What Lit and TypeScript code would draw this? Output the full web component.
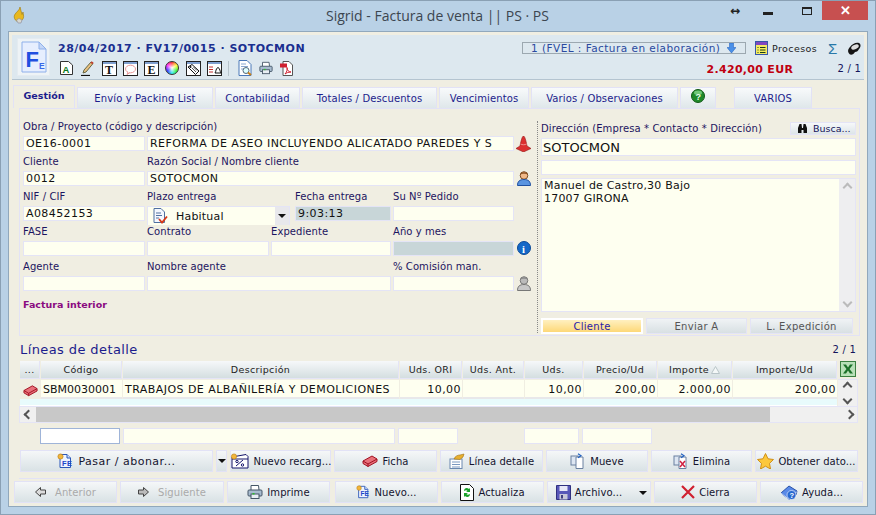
import { LitElement, html, css, svg } from "lit";
import { customElement } from "lit/decorators.js";

const ic = (w: number, h: number, body: unknown, vb = "0 0 16 16") =>
  html`<svg class="ic" width=${w} height=${h} viewBox=${vb}>${body}</svg>`;

const feDoc = (s = 16) =>
  ic(s, s, svg`<path d="M3 1.500h7l3.500 3.500v9.500H3z" fill="#eef4fe" stroke="#2b57b8"/><path d="M10 1.500V5h3.500" fill="#cfe0fa" stroke="#2b57b8"/><text x="5" y="12.600" font-size="7.500" font-weight="700" fill="#1c47c8" font-family="Liberation Sans">FE</text><circle cx="3.500" cy="3.500" r="2.600" fill="#f2b63c" stroke="#b87a10" stroke-width=".6"/>`);
const winTop = svg`<rect x=".5" y=".5" width="14" height="14" fill="#fff" stroke="#222"/><rect x="1" y="1" width="13" height="2" fill="#7f9fcf"/>`;
const brick = (s = 16) =>
  ic(s, s, svg`<path d="M1 8l9-5 5 3v2.500l-9 5-5-3z" fill="#e8707a" stroke="#a01020"/><path d="M1 8l5 3 9-5M6 11v2.500" fill="none" stroke="#a01020"/>`);
const printer = (s = 16) =>
  ic(s, s, svg`<path d="M4 6V1.500h7.500L12 6" fill="#fff" stroke="#456"/><rect x="1" y="6" width="14" height="6" rx="1" fill="#a8bccf" stroke="#456"/><rect x="4" y="10" width="8" height="4.500" fill="#e8eef4" stroke="#456"/><rect x="5.500" y="9" width="2" height="1.500" fill="#2cc02c"/>`);

const I = {
  app: ic(12, 18, svg`<path d="M7 0C7 3 3 5 1.500 8c-1 2.500.5 5 2 6l5-.5c1.500-1 2.500-3 2-5.500L10 5 9 7.500z" fill="#e8b820" stroke="#a07808" stroke-width=".6"/><path d="M3.500 13l2.500-1.500 3 1.500-1 3H5z" fill="#d8d8d0" stroke="#889" stroke-width=".6"/>`, "0 0 12 18"),
  logo: html`<svg class="ic" width="26" height="32" viewBox="0 0 26 32"><path d="M1 1h17l7 7v23H1z" fill="#e6eefe" stroke="#8fb0ea"/><path d="M18 1v7h7z" fill="#c4d6f6" stroke="#8fb0ea"/><text x="4.500" y="26" font-size="22" font-weight="700" fill="#1f4fe0" font-family="Liberation Sans">F</text><text x="18" y="28" font-size="8.500" font-weight="700" fill="#3a6ae8" font-family="Liberation Sans">E</text></svg>`,
  a: ic(13, 14, svg`<path d="M.5.5h8l4 3.500v9.500H.5z" fill="#fff" stroke="#333"/><text x="2.500" y="11.500" font-size="9.500" font-weight="700" fill="#0a7a20" font-family="Liberation Sans">A</text>`, "0 0 13 14"),
  pen: ic(14, 15, svg`<path d="M3 9l7-8 2 1.500-7 8.500-3 1z" fill="#e8c080" stroke="#664"/><path d="M10 1l2 1.500" stroke="#c04030" stroke-width="2"/><path d="M0 14.500h9" stroke="#111" stroke-width="1.200"/>`, "0 0 14 15"),
  t: ic(15, 15, svg`${winTop}<text x="3" y="13" font-size="12" font-weight="700" fill="#111" font-family="Liberation Serif">T</text>`, "0 0 15 15"),
  bubble: ic(15, 15, svg`${winTop}<ellipse cx="7.500" cy="8" rx="5" ry="3.800" fill="#fff" stroke="#e89898"/><path d="M5 11l-1 2.500 3-2" fill="#fff" stroke="#e89898"/>`, "0 0 15 15"),
  e: ic(15, 15, svg`${winTop}<text x="3.500" y="13" font-size="12" font-weight="700" fill="#111" font-family="Liberation Serif">E</text>`, "0 0 15 15"),
  tag: ic(15, 15, svg`${winTop}<path d="M2 6l4-2.500 7 6.500-3.500 3.500z" fill="#fff" stroke="#111"/><path d="M6 7l4 4M7.500 6l3.500 3.500" stroke="#555"/><circle cx="4.500" cy="6" r="1" fill="#111"/>`, "0 0 15 15"),
  bell: ic(15, 15, svg`${winTop}<path d="M2 6h4M2 8.500h4M2 11h4" stroke="#c03030"/><path d="M8 12c1-1 .8-5 3-5.500 2 .5 2 4.500 3 5.500z" fill="#fff" stroke="#111"/>`, "0 0 15 15"),
  search: ic(14, 16, svg`<path d="M1 .5h8l4 4v11H1z" fill="#fff" stroke="#4a78b8"/><path d="M3 4h5M3 6.500h7M3 9h3" stroke="#8aa8d0"/><circle cx="8" cy="10.500" r="3" fill="#dff" stroke="#567"/><path d="M10 12.500l3 2.500" stroke="#c88018" stroke-width="2"/>`, "0 0 14 16"),
  pdf: ic(13, 15, svg`<path d="M3 .5h6l3.500 3.500v10.500H3z" fill="#fff" stroke="#555"/><rect x="0" y="2.500" width="7" height="4" fill="#d02030"/><path d="M5 13c2-2 2.500-5 2-6.500 0 3 2 4.500 4 4.500-3 0-4.500 1-6 2z" fill="none" stroke="#d02030"/>`, "0 0 13 15"),
  down: ic(9, 10, svg`<path d="M2.500 0h4v4.500H9L4.500 10 0 4.500h2.500z" fill="#4a90e8" stroke="#1c58b8" stroke-width=".5"/>`, "0 0 9 10"),
  proc: ic(13, 14, svg`<rect x=".5" y=".5" width="12" height="13" fill="#f6ec60" stroke="#3858a8"/><rect x="1" y="1" width="11" height="3" fill="#8048c0"/><path d="M2.500 6.500h1M5 6.500h5.500M2.500 9h1M5 9h5.500M2.500 11.500h1M5 11.500h5.500" stroke="#184018"/>`, "0 0 13 14"),
  fold: ic(14, 13, svg`<path d="M3 12.500C0 10 1 7 3 5c2-3 6-5 9-4 2 1 2 4 0 6-1 2-2 3-4 3-1 2-3 3-5 2.500z" fill="#151515"/><ellipse cx="8" cy="5" rx="4" ry="2.200" fill="#ddd" transform="rotate(-25 8 5)"/>`, "0 0 14 13"),
  help: html`<svg class="ic" width="14" height="14" viewBox="0 0 14 14"><circle cx="7" cy="7" r="6.500" fill="#1f8a2a" stroke="#125a18"/><ellipse cx="7" cy="3.800" rx="4" ry="2.200" fill="#70c878"/><text x="4.500" y="11" font-size="9" font-weight="700" fill="#e8ffe8" font-family="Liberation Sans">?</text></svg>`,
  cone: ic(15, 16, svg`<path d="M7.500 0c1.500 0 3 7 3.500 10l4 2.500-7.500 3.500L0 12.500 4 10C4.500 7 6 0 7.500 0z" fill="#dc3030" stroke="#901818" stroke-width=".6"/><path d="M4.500 8c1.500 1 4.500 1 6 0" stroke="#f09090" fill="none"/>`, "0 0 15 16"),
  person: ic(14, 15, svg`<circle cx="7" cy="4.500" r="3.800" fill="#f0b888" stroke="#7a4a20"/><path d="M3 3.500c1-3 7-3 8 0-2-1-6-1-8 0z" fill="#8a5020"/><path d="M.5 14.500c0-4 2-6 6.500-6s6.500 2 6.500 6z" fill="#5a94e0" stroke="#2050a0"/>`, "0 0 14 15"),
  grayperson: ic(14, 15, svg`<circle cx="7" cy="4.500" r="3.800" fill="#bbb" stroke="#777"/><path d="M3 3.500c1-3 7-3 8 0-2-1-6-1-8 0z" fill="#888"/><path d="M.5 14.500c0-4 2-6 6.500-6s6.500 2 6.500 6z" fill="#c8c8c8" stroke="#777"/>`, "0 0 14 15"),
  info: html`<svg class="ic" width="14" height="14" viewBox="0 0 14 14"><circle cx="7" cy="7" r="6.500" fill="#1468c8" stroke="#0c4a98"/><text x="5" y="11.500" font-size="10.500" font-weight="700" fill="#fff" font-family="Liberation Serif">i</text></svg>`,
  doccheck: ic(16, 16, svg`<path d="M2 .5h7l3.500 3.500v10.500H2z" fill="#f4f8ff" stroke="#5070a0"/><path d="M4 5h5M4 7.500h6M4 10h3" stroke="#5070a0"/><path d="M7 11l3 3.500 5-6" fill="none" stroke="#d83818" stroke-width="1.800"/>`),
  bino: ic(11, 9, svg`<path d="M1 9V4l1.500-4h2L5 4h1l.5-4h2L10 4v5H6.500V6h-2v3z" fill="#111"/>`, "0 0 11 9"),
  excel: ic(16, 16, svg`<rect x=".5" y=".5" width="15" height="15" fill="#b8e0b8" stroke="#3a8040"/><path d="M3 3.500h3l2 3 2-3h3l-3.500 4.500L13 12.500h-3l-2-3-2 3H3l3.500-4.500z" fill="#1a7028"/>`),
  tri: ic(9, 8, svg`<path d="M4.500 .5L8.500 7.500H.5z" fill="#f4f8f8" stroke="#b8c4c8"/>`, "0 0 9 8"),
  recarg: ic(20, 16, svg`<path d="M2 4l14-2.500 2 2V15H2z" fill="#fff" stroke="#14146a"/><path d="M2 6h16" stroke="#14146a"/><path d="M6 13l7-6" stroke="#14146a"/><circle cx="7" cy="8.500" r="1.200" fill="none" stroke="#14146a"/><circle cx="12.500" cy="12" r="1.200" fill="none" stroke="#14146a"/><circle cx="4" cy="3.500" r="2.600" fill="#f2b63c" stroke="#b87a10" stroke-width=".6"/>`, "0 0 20 16"),
  linea: ic(16, 16, svg`<rect x="1" y="6" width="12" height="9.500" fill="#fff" stroke="#6a88b0"/><path d="M3 9h8M3 11.500h8M3 14h8" stroke="#7a98c0"/><path d="M5 6c1-3 4-4 6-4l4-1-1 3-3 2.500z" fill="#e8b030" stroke="#a07010" stroke-width=".6"/>`),
  mueve: ic(16, 16, svg`<rect x="1" y="3" width="7" height="9" fill="#dde6f2" stroke="#6a80a0"/><path d="M6 4h7v11.500H6z" fill="#fff" stroke="#6a80a0"/><path d="M8 .8l3 2-3 2" fill="none" stroke="#2060c0" stroke-width="1.200"/>`),
  elimina: ic(16, 16, svg`<rect x="1" y="3" width="7" height="9" fill="#dde6f2" stroke="#6a80a0"/><path d="M6 4h7v11.500H6z" fill="#fff" stroke="#6a80a0"/><path d="M7 8l5 6M12 8l-5 6" stroke="#d02040" stroke-width="1.500"/><path d="M8 .8l3 2-3 2" fill="none" stroke="#2060c0" stroke-width="1.200"/>`),
  star: ic(17, 16, svg`<path d="M8.500.5l2.500 5.300 5.500.7-4 3.900 1 5.600-5-2.800-5 2.800 1-5.600-4-3.900 5.500-.7z" fill="#fcc83c" stroke="#d09018"/>`, "0 0 17 16"),
  left: ic(11, 10, svg`<path d="M5.500.5L.5 5l5 4.500V7H10.500V3H5.500z" fill="#dcdcdc" stroke="#444"/>`, "0 0 11 10"),
  right: ic(11, 10, svg`<path d="M5.500.5l5 4.500-5 4.500V7H.5V3h5z" fill="#bbb" stroke="#444"/>`, "0 0 11 10"),
  refresh: ic(14, 17, svg`<path d="M.5.500h9l4 4v12H.5z" fill="#fff" stroke="#111"/><path d="M4 7c0-3 3-4 5-2l1-1v4H6l1.500-1C7 6 5.500 6 4 7zM10 10c0 3-3 4-5 2l-1 1V9h4l-1.500 1c.5 1 2 1 3.500 0z" fill="#18a028"/>`, "0 0 14 17"),
  save: ic(15, 15, svg`<path d="M.5.500h14v14H.5z" fill="#5858b8" stroke="#303080"/><rect x="3.500" y="1" width="8" height="5" fill="#e8e8f8"/><rect x="3.500" y="9" width="8" height="5.500" fill="#c8c8d8"/><rect x="5" y="10" width="2" height="3.500" fill="#404080"/>`, "0 0 15 15"),
  close: ic(14, 14, svg`<path d="M1 1l12 12M13 1L1 13" stroke="#d02030" stroke-width="2.200"/>`, "0 0 14 14"),
  book: ic(18, 15, svg`<path d="M1 8l8-7 8 5-1 4-7 4.500z" fill="#5a8ae8" stroke="#2850a8"/><path d="M1 8l8 6.500 8-8" fill="none" stroke="#c8d8f8"/><circle cx="11.500" cy="10" r="4.500" fill="#2868d0" stroke="#fff" stroke-width=".6"/><text x="9.600" y="13" font-size="7.500" font-weight="700" fill="#fff" font-family="Liberation Sans">?</text>`, "0 0 18 15"),
};

const caret = html`<span class="caret"></span>`;

@customElement("app-root")
export class AppRoot extends LitElement {
  static styles = css`
    :host {
      display: block;
      width: 876px;
      height: 515px;
      font-family: "DejaVu Sans", Verdana, sans-serif;
      font-size: 10px;
      color: #14145a;
      overflow: hidden;
    }
    * { box-sizing: border-box; }
    .ic { display: block; flex: none; }
    .window {
      width: 876px; height: 515px;
      background: #b9d1e6;
      border: 1px solid #8aa0b4;
      display: flex; flex-direction: column;
    }
    .titlebar { height: 29px; flex: none; display: grid; grid-template-columns: 12px 1fr 14px 47px 32px 45px; align-items: start; padding: 0 7px 0 12px; }
    .appicon { padding-top: 6px; }
    .title { font: 14px "Open Sans", "Noto Sans", sans-serif; color: #3c4650; text-align: center; padding: 4px 0 0 120px; line-height: 21px; }
    .resize { font: 700 12px "DejaVu Sans", sans-serif; color: #222; padding-top: 3px; }
    .tb-btn { height: 19px; display: flex; align-items: center; justify-content: center; }
    .tb-min { width: 10px; height: 3px; background: #222; margin-top: 5px; }
    .tb-max { width: 10px; height: 8px; border: 1px solid #222; border-top-width: 2px; }
    .tb-close { background: #c75050; color: #fff; font: 700 13px "Liberation Sans", sans-serif; margin-left: -1px; }
    .client {
      flex: 1; margin: 1px 7px 7px 7px;
      background: #f0eee2;
      border: 1px solid #91a8bc;
      padding: 3px 3px 0 3px;
      display: flex; flex-direction: column;
    }
    .head {
      height: 45px; flex: none; background: #dde8ef; border-bottom: 1px solid #b4c4d0;
      display: flex; padding: 3px 3px 0 5px; gap: 8px;
    }
    .logo { width: 33px; height: 38px; background: #eef3f6; border: 1px solid #e4ebf0; display: flex; align-items: center; justify-content: center; }
    .head-main { flex: 1; display: flex; flex-direction: column; padding-top: 3px; }
    .head-row { display: flex; align-items: center; height: 14px; }
    .head-row.second { height: 18px; margin-top: 5px; align-items: flex-start; }
    .doc-title { font-weight: 700; font-size: 11px; color: #1a2f90; letter-spacing: 0.5px; margin-right: auto; white-space: nowrap; }
    .status { width: 224px; height: 12px; border: 1px solid #9ca8b0; display: flex; align-items: center; gap: 7px; padding-left: 8px; color: #2a4aa0; font-size: 10.500px; letter-spacing: .46px; white-space: nowrap; }
    .procesos { display: flex; align-items: center; gap: 4px; margin-left: 9px; color: #222; font-size: 9.500px; letter-spacing: .4px; width: 73px; }
    .sigma { color: #2878a8; font: 15px "Liberation Sans", sans-serif; width: 19px; }
    .tools { display: grid; grid-template-columns: repeat(8, 21px) 10px repeat(3, 21px); align-items: center; height: 16px; margin: 0 auto 0 2px; }
    .tools .sep { width: 1px; height: 15px; background: #b8c4cc; }
    .wheel { width: 14px; height: 14px; border-radius: 50%; background: radial-gradient(circle, #fff 0, rgba(255,255,255,0) 65%), conic-gradient(#f33, #ff3, #3e3, #3ee, #33f, #f3f, #f33); border: 1px solid #333; }
    .total { color: #c00010; font-weight: 700; font-size: 11px; letter-spacing: .3px; width: 131px; margin-top: 3px; white-space: nowrap; }
    .pager { color: #14145a; font-size: 10px; letter-spacing: .2px; white-space: nowrap; }
    .second .pager { margin-top: 3px; }
    .tabs {
      height: 28px; flex: none; display: grid;
      grid-template-columns: 62px 136px 85px 135px 90px 147px 36px 78px;
      column-gap: 2px; padding: 5px 0 0 1px; align-items: start;
    }
    .tab {
      height: 21px; margin-top: 2px; background: linear-gradient(#f8fafb, #dfe7ea);
      border: 1px solid #e2e2f6; border-bottom: 0;
      display: flex; align-items: center; justify-content: center; color: #1c1c8c; font-size: 10px; letter-spacing: .12px;
    }
    .tab.on { height: 23px; margin-top: 0; background: #f0eee2; font-weight: 700; font-size: 9.500px; letter-spacing: 0; align-items: flex-start; padding-top: 4px; }
    .tab.help { align-items: flex-start; padding-top: 1px; }
    .tab.gap { margin-left: 16px; margin-right: -16px; }
    .panel {
      margin: 0 4px 0 7px; height: 228px; flex: none;
      border: 1px solid #e2e2f6;
      display: grid; grid-template-columns: 515px 1fr; padding: 11px 3px 2px 3px;
    }
    .left { display: flex; flex-direction: column; gap: 4px; }
    .row { display: grid; column-gap: 3px; align-items: start; height: 31px; }
    .r1 { grid-template-columns: 121px 366px 15px; }
    .r3 { grid-template-columns: 121px 121px 119px 120px 15px; }
    .rp { grid-template-columns: 121px 145px 95px 120px; }
    .r5 { grid-template-columns: 121px 243px 120px 15px; }
    .lab { display: block; height: 16px; line-height: 13px; white-space: nowrap; letter-spacing: .08px; color: #1c1460; }
    .inp { height: 15px; background: #fefff0; border: 1px solid #e4e4f6; font-size: 11px; color: #111; padding: 0 2px; line-height: 13px; white-space: nowrap; overflow: hidden; letter-spacing: .42px; margin-right: -1px; }
    .inp.gray { background: #c8d6d8; }
    .sel { height: 19px; margin-right: 2px; background: #fefff0; border: 1px solid #e4e4f6; border-bottom: 0; display: flex; align-items: center; gap: 8px; padding: 0 0 0 4px; font-size: 11px; letter-spacing: .2px; color: #111; }
    .sel .arrow { margin-left: auto; width: 14px; height: 100%; background: #e8e8ec; display: flex; align-items: center; justify-content: center; }
    .caret { display: block; width: 0; height: 0; border: 4px solid transparent; border-top: 4px solid #111; border-bottom: 0; }
    .rowicon { display: flex; justify-content: center; padding-top: 16px; }
    .fi { color: #8a0a80; font-weight: 700; font-size: 9.500px; margin-top: 4px; }
    .right { border-left: 1px dotted #888; padding-left: 3px; margin-left: -1px; display: flex; flex-direction: column; margin-top: 1px; }
    .dir-head { display: flex; justify-content: space-between; align-items: flex-start; height: 17px; }
    .dir-head .lab { margin-top: 1px; letter-spacing: .12px; }
    .busca { width: 66px; height: 13px; background: linear-gradient(#f6f8fa, #dde5e8); border: 1px solid #e4e4f6; display: flex; align-items: center; gap: 5px; padding-left: 6px; color: #14145a; font-size: 9.500px; margin-top: 1px; white-space: nowrap; }
    .dir-name { height: 18px; font-size: 13px; line-height: 17px; background: #fefff0; border: 1px solid #e4e4f6; padding: 0 1px; color: #111; }
    .dir-2 { height: 15px; margin-top: 4px; background: #fefff0; border: 1px solid #e4e4f6; }
    .area { height: 134px; margin-top: 3px; background: #fefff0; border: 1px solid #e4e4f6; display: grid; grid-template-columns: 1fr 16px; font-size: 11px; letter-spacing: .2px; line-height: 13px; color: #111; }
    .area-text { padding: 0 2px; }
    .vs { background: #eeeef0; display: flex; flex-direction: column; justify-content: space-between; align-items: center; padding: 5px 0; color: #bbb; }
    .chev { display: block; width: 7px; height: 7px; border: solid currentColor; border-width: 2px 0 0 2px; transform: rotate(45deg); }
    .chev.d { transform: rotate(225deg); }
    .chev.l { transform: rotate(-45deg); }
    .chev.r { transform: rotate(135deg); }
    .addr-tabs { display: grid; grid-template-columns: 102px 101px 103px; column-gap: 3px; margin-top: 6px; height: 15px; }
    .at { background: linear-gradient(#f0f3f5, #d8e0e3); border: 1px solid #e4e4f6; color: #555; display: flex; align-items: center; justify-content: center; font-size: 10px; letter-spacing: .3px; }
    .at.on { background: linear-gradient(#fff0c0, #fdd878); border: 2px solid #fff; color: #2a1aa8; padding-top: 1px; }
    .det-head { height: 25px; flex: none; display: flex; justify-content: space-between; align-items: center; margin: 0 7px 0 8px; padding: 2px 1px 0 0; }
    .det-title { font-size: 13px; color: #1c1c8c; letter-spacing: .4px; }
    .table {
      margin: 0 4px 0 7px; display: grid;
      grid-template-columns: 20px 81px 276px 62px 61px 58px 73px 74px 104px 20px;
      grid-template-rows: 18px 20px 7px 17px; column-gap: 1px; padding-left: 1px; flex: none; width: 838px;
    }
    .th { background: linear-gradient(#f6f8fa, #d4dee0); border: 1px solid #e4e4f6; border-width: 0 1px 1px 0; display: flex; align-items: center; justify-content: center; gap: 2px; color: #222; font-size: 9.500px; letter-spacing: .35px; white-space: nowrap; }
    .td { background: #fefff0; border-bottom: 2px solid #e8e8ea; font-size: 11px; color: #111; display: flex; align-items: center; justify-content: flex-end; padding: 1px 1px 0; white-space: nowrap; letter-spacing: .45px; margin-top: 1px; }
    .td.l { justify-content: flex-start; padding-left: 2px; }
    .td.code { letter-spacing: 0; }
    .td.c { justify-content: center; background: transparent; border: 0; }
    .xl { display: flex; justify-content: center; }
    .side { grid-row: 2 / span 2; grid-column: 10; border: solid #e4e4f6; border-width: 1px 1px 0 0; display: flex; flex-direction: column; gap: 6px; align-items: center; padding-top: 3px; color: #555; background: #f0f0f0; }
    .band { grid-column: 1 / span 9; background: #e8fbfc; border-bottom: 1px solid #fff; }
    .hsb { grid-column: 1 / span 10; background: #f0f0f0; border: 1px solid #e4e4f6; display: grid; grid-template-columns: 16px 734px 1fr 16px; align-items: center; justify-items: center; color: #555; margin-left: -1px; }
    .thumb { background: #c8c8c8; height: 100%; width: 100%; }
    .filters { display: grid; grid-template-columns: 80px 272px 60px 60px 55px 70px; column-gap: 3px; margin: 5px 0 0 28px; height: 16px; flex: none; }
    .filters div { background: #fefff0; border: 1px solid #e4e4f6; }
    .filters .focus { border-color: #9fb4d8; background: #fff; }
    .filters .none { background: transparent; border: 0; }
    .actions { display: grid; grid-template-columns: 193px 11px 101px 103px 103px 102px 101px 103px; column-gap: 3px; height: 28px; margin: 6px 0 0 8px; padding: 0 0 6px 0; flex: none; }
    .rule { height: 1px; background: #e2e2f6; margin: 0 4px 0 7px; flex: none; }
    .nav { display: grid; grid-template-columns: 103px 104px 103px 105px 103px 104px 103px 103px; column-gap: 3px; height: 22px; margin: 2px 0 0 2px; flex: none; }
    .btn { background: linear-gradient(#f5f7f8, #d9e2e5); border: 1px solid #e2e2f6; display: flex; align-items: center; justify-content: center; gap: 4px; color: #14142e; font-size: 10px; letter-spacing: .08px; white-space: nowrap; }
    .btn.lg { font-size: 11px; gap: 5px; letter-spacing: .5px; }
    .btn.off { color: #aaa; gap: 9px; }
    .btn.mid { margin-left: 2px; }
    .btn.arch { position: relative; padding-right: 20px; }
    .btn.arch .caret { position: absolute; right: 3px; top: 9px; }
  `;

  btn(label: string, icon: unknown, cls = "") {
    return html`<div class="btn ${cls}">${icon}<span>${label}</span></div>`;
  }

  field(label: string, value = "", cls = "") {
    return html`<div><span class="lab">${label}</span><div class="inp ${cls}">${value}</div></div>`;
  }

  render() {
    return html`<div class="window">
      <div class="titlebar">
        <div class="appicon">${I.app}</div>
        <div class="title">Sigrid - Factura de venta || PS · PS</div>
        <div class="resize">↔</div>
        <div class="tb-btn"><div class="tb-min"></div></div>
        <div class="tb-btn"><div class="tb-max"></div></div>
        <div class="tb-btn tb-close">✕</div>
      </div>
      <div class="client">
        <header class="head">
          <div class="logo">${I.logo}</div>
          <div class="head-main">
            <div class="head-row">
              <div class="doc-title">28/04/2017 · FV17/0015 · SOTOCMON</div>
              <div class="status"><span>1 (FVEL : Factura en elaboración)</span>${I.down}</div>
              <div class="procesos">${I.proc}<span>Procesos</span></div>
              <div class="sigma">Σ</div>${I.fold}
            </div>
            <div class="head-row second">
              <div class="tools">
                ${I.a}${I.pen}${I.t}${I.bubble}${I.e}<div class="wheel"></div>${I.tag}${I.bell}
                <div class="sep"></div>${I.search}${printer(14)}${I.pdf}
              </div>
              <div class="total">2.420,00 EUR</div>
              <div class="pager">2 / 1</div>
            </div>
          </div>
        </header>
        <nav class="tabs">
          <div class="tab on">Gestión</div>
          <div class="tab">Envío y Packing List</div>
          <div class="tab">Contabilidad</div>
          <div class="tab">Totales / Descuentos</div>
          <div class="tab">Vencimientos</div>
          <div class="tab">Varios / Observaciones</div>
          <div class="tab help">${I.help}</div>
          <div class="tab gap">VARIOS</div>
        </nav>
        <section class="panel">
          <div class="left">
            <div class="row r1">
              ${this.field("Obra / Proyecto (código y descripción)", "OE16-0001")}
              ${this.field("\u00a0", "REFORMA DE ASEO INCLUYENDO ALICATADO PAREDES Y S")}
              <div class="rowicon">${I.cone}</div>
            </div>
            <div class="row r1">
              ${this.field("Cliente", "0012")}
              ${this.field("Razón Social / Nombre cliente", "SOTOCMON")}
              <div class="rowicon">${I.person}</div>
            </div>
            <div class="row rp">
              ${this.field("NIF / CIF", "A08452153")}
              <div><span class="lab">Plazo entrega</span><div class="sel">${I.doccheck}<span>Habitual</span><span class="arrow">${caret}</span></div></div>
              ${this.field("Fecha entrega", "9:03:13", "gray")}
              ${this.field("Su Nº Pedido")}
            </div>
            <div class="row r3">
              ${this.field("FASE")}${this.field("Contrato")}${this.field("Expediente")}
              ${this.field("Año y mes", "", "gray")}
              <div class="rowicon">${I.info}</div>
            </div>
            <div class="row r5">
              ${this.field("Agente")}${this.field("Nombre agente")}${this.field("% Comisión man.")}
              <div class="rowicon">${I.grayperson}</div>
            </div>
            <div class="fi">Factura interior</div>
          </div>
          <div class="right">
            <div class="dir-head">
              <span class="lab">Dirección (Empresa * Contacto * Dirección)</span>
              <div class="busca">${I.bino}<span>Busca...</span></div>
            </div>
            <div class="dir-name">SOTOCMON</div>
            <div class="dir-2"></div>
            <div class="area">
              <div class="area-text">Manuel de Castro,30 Bajo<br />17007 GIRONA</div>
              <div class="vs"><span class="chev"></span><span class="chev d"></span></div>
            </div>
            <div class="addr-tabs">
              <div class="at on">Cliente</div>
              <div class="at">Enviar A</div>
              <div class="at">L. Expedición</div>
            </div>
          </div>
        </section>
        <div class="det-head"><span class="det-title">Líneas de detalle</span><span class="pager">2 / 1</span></div>
        <div class="table">
          <div class="th">...</div><div class="th">Código</div><div class="th">Descripción</div>
          <div class="th">Uds. ORI</div><div class="th">Uds. Ant.</div><div class="th">Uds.</div>
          <div class="th">Precio/Ud</div><div class="th">Importe ${I.tri}</div><div class="th">Importe/Ud</div>
          <div class="xl">${I.excel}</div>
          <div class="td c">${brick(15)}</div>
          <div class="td l code">SBM0030001</div>
          <div class="td l">TRABAJOS DE ALBAÑILERÍA Y DEMOLICIONES</div>
          <div class="td">10,00</div><div class="td"></div><div class="td">10,00</div>
          <div class="td">200,00</div><div class="td">2.000,00</div><div class="td">200,00</div>
          <div class="side"><span class="chev"></span><span class="chev d"></span></div>
          <div class="band"></div>
          <div class="hsb"><span class="chev l"></span><div class="thumb"></div><span></span><span class="chev r"></span></div>
        </div>
        <div class="filters">
          <div class="focus"></div><div></div><div></div><div class="none"></div><div></div><div></div>
        </div>
        <div class="actions">
          ${this.btn("Pasar / abonar...", feDoc(16), "lg")}
          <div class="btn">${caret}</div>
          ${this.btn("Nuevo recarg...", I.recarg)}
          ${this.btn("Ficha", brick(16))}
          ${this.btn("Línea detalle", I.linea)}
          ${this.btn("Mueve", I.mueve)}
          ${this.btn("Elimina", I.elimina)}
          ${this.btn("Obtener dato...", I.star)}
        </div>
        <div class="rule"></div>
        <div class="nav">
          ${this.btn("Anterior", I.left, "off")}
          ${this.btn("Siguiente", I.right, "off")}
          ${this.btn("Imprime", printer(16))}
          ${this.btn("Nuevo...", feDoc(14), "mid")}
          ${this.btn("Actualiza", I.refresh)}
          <div class="btn arch">${I.save}<span>Archivo...</span>${caret}</div>
          ${this.btn("Cierra", I.close)}
          ${this.btn("Ayuda...", I.book)}
        </div>
      </div>
    </div>`;
  }
}
